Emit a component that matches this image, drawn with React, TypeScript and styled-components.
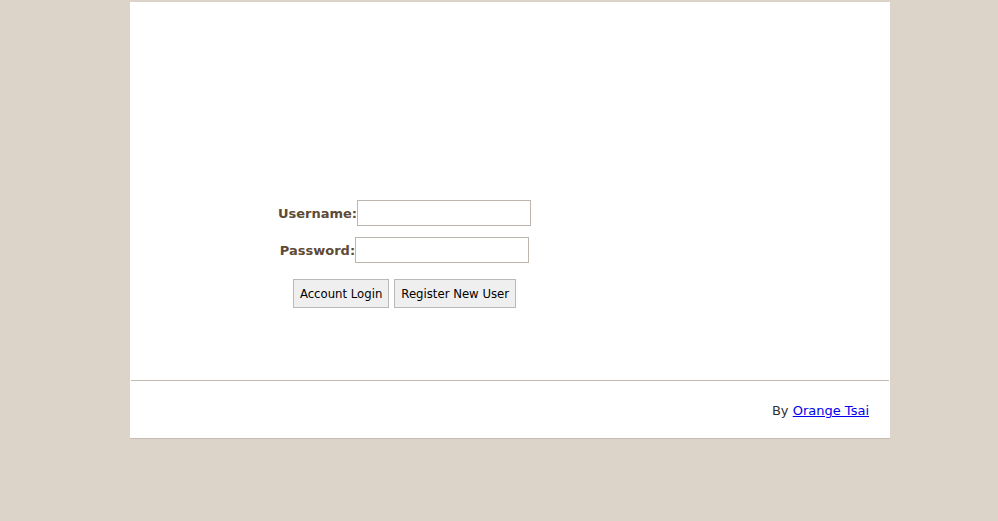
import React from 'react';
import styled, { createGlobalStyle } from 'styled-components';

const GlobalStyle = createGlobalStyle`
  body {
    margin: 0;
    background: #dcd4c8;
    font-family: Verdana, "DejaVu Sans", sans-serif;
  }
`;

const Page = styled.div`
  width: 760px;
  margin: 2px 0 0 130px;
  background: #ffffff;
  border-bottom: 1px solid #c4bcb3;
`;

const Main = styled.div`
  height: 378px;
  box-sizing: border-box;
  padding-top: 198px;
`;

const LoginForm = styled.form`
  width: 549px;
  display: flex;
  flex-direction: column;
  align-items: center;
  margin: 0;
`;

const Row = styled.div<{ gap?: number }>`
  display: flex;
  align-items: center;
  justify-content: center;
  margin-top: ${(p) => p.gap ?? 0}px;
`;

const Label = styled.label`
  color: #5e4a35;
  font-family: "DejaVu Sans", Verdana, sans-serif;
  font-weight: bold;
  font-size: 13px;
`;

const TextInput = styled.input`
  width: 174px;
  height: 26px;
  box-sizing: border-box;
  border: 1px solid #bdb6ae;
  background: #fff;
  padding: 2px 4px;
  margin: 0;
  outline: none;
`;

const Button = styled.button`
  height: 29px;
  padding: 0 6px;
  margin: 0 2.5px;
  background: #efefef;
  border: 1px solid #b9b9b9;
  border-radius: 0;
  font-family: "DejaVu Sans Condensed", Tahoma, sans-serif;
  font-size: 13px;
  color: #000;
`;

const Divider = styled.div`
  height: 1px;
  margin: 0 1px;
  background: #c2b9b1;
`;

const Footer = styled.div`
  height: 57px;
  box-sizing: border-box;
  padding: 22px 21px 0 0;
  text-align: right;
  font-family: "DejaVu Sans", Verdana, sans-serif;
  font-size: 13px;
  color: #333;
`;

const AuthorLink = styled.a`
  color: #0000ee;
  text-decoration: underline;
`;

export default function App() {
  return (
    <>
      <GlobalStyle />
      <Page>
        <Main>
          <LoginForm onSubmit={(e) => e.preventDefault()}>
            <Row>
              <Label htmlFor="username">Username:</Label>
              <TextInput id="username" type="text" />
            </Row>
            <Row gap={11}>
              <Label htmlFor="password">Password:</Label>
              <TextInput id="password" type="password" />
            </Row>
            <Row gap={16}>
              <Button type="submit">Account Login</Button>
              <Button type="button">Register New User</Button>
            </Row>
          </LoginForm>
        </Main>
        <Divider />
        <Footer>
          By <AuthorLink href="#">Orange Tsai</AuthorLink>
        </Footer>
      </Page>
    </>
  );
}
